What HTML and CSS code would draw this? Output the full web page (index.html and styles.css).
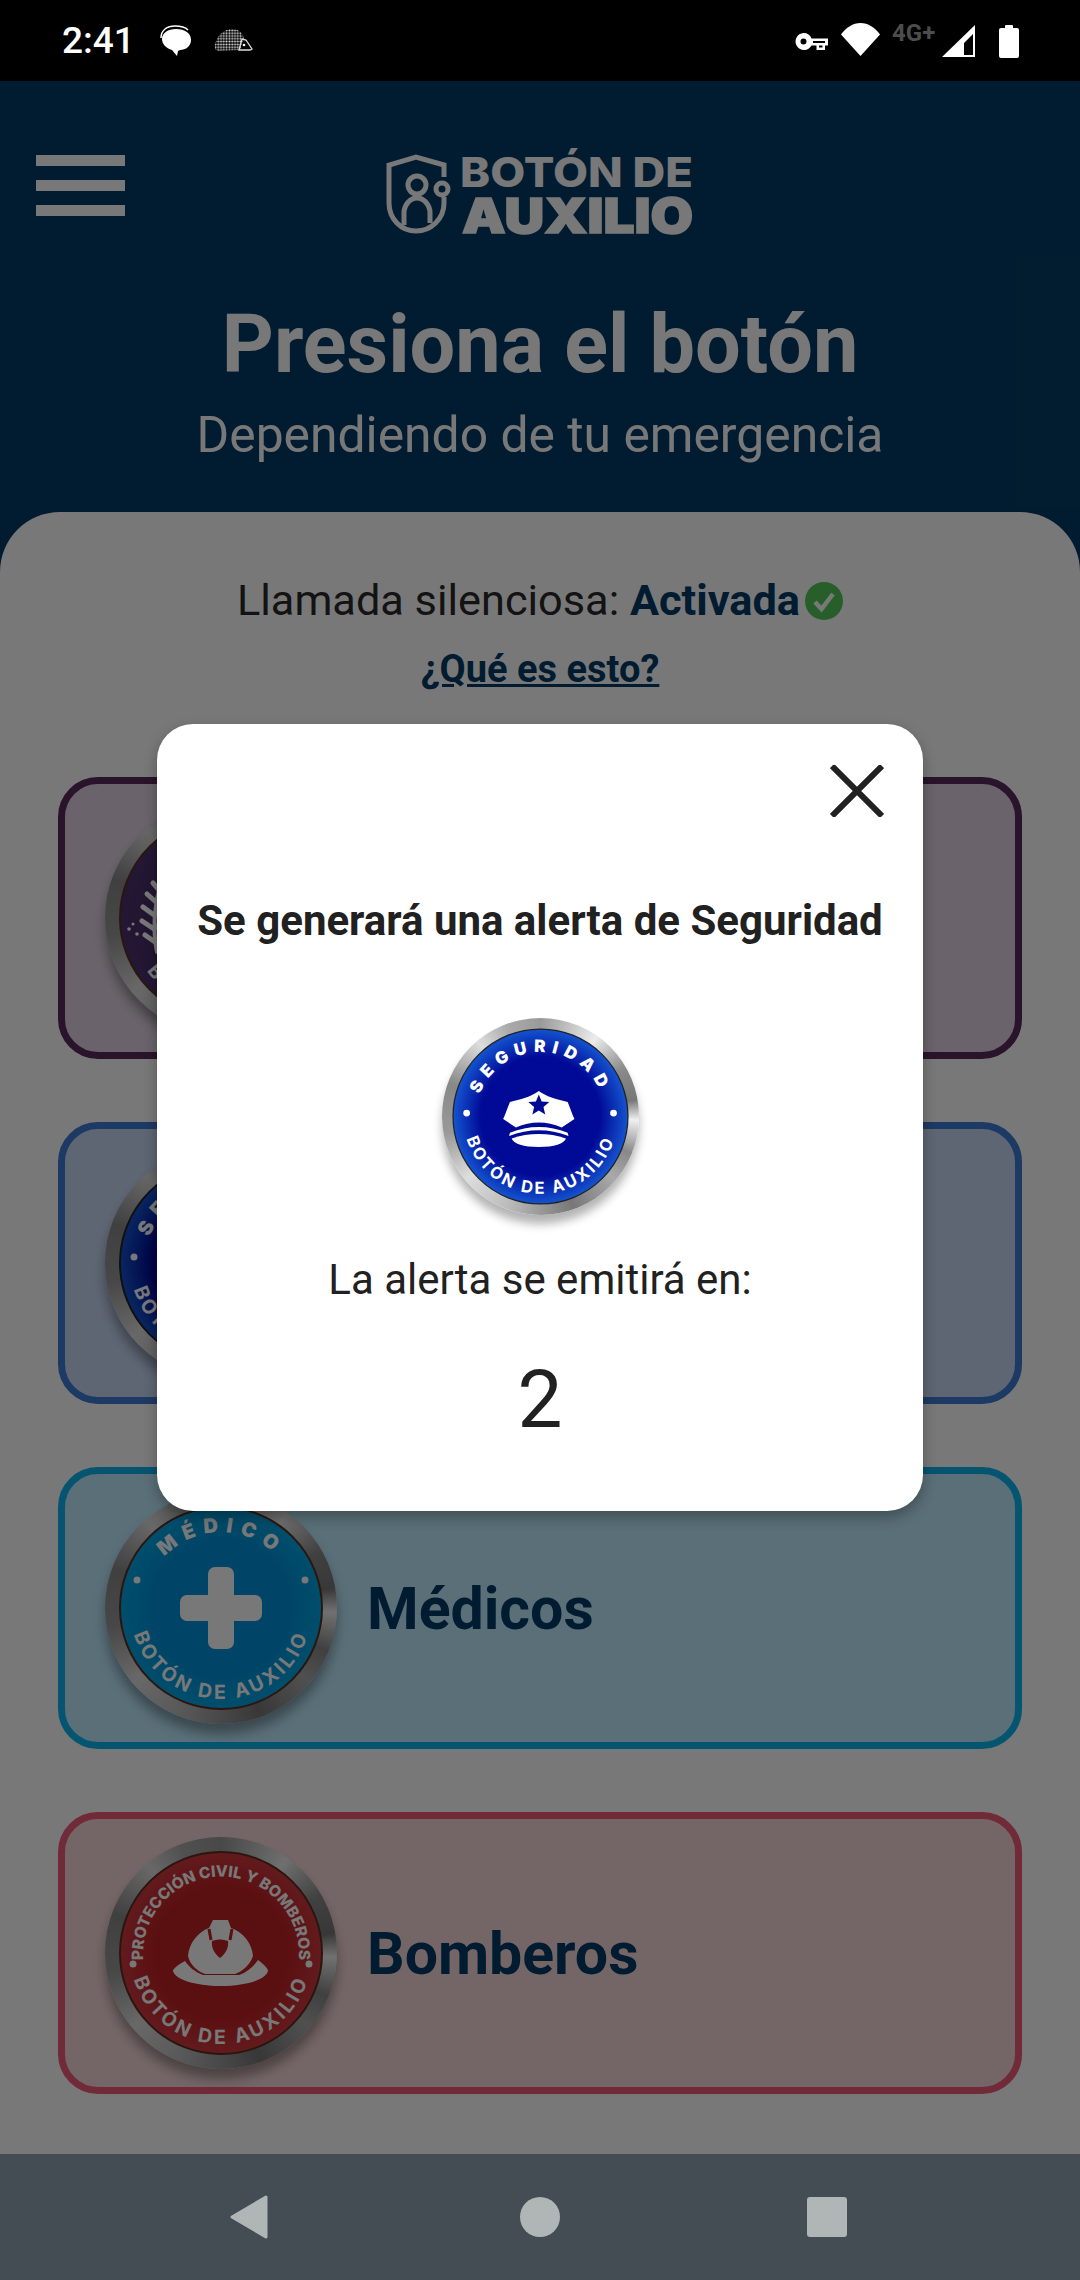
FILE: index.html
```html
<!DOCTYPE html>
<html lang="es">
<head>
<meta charset="utf-8">
<title>Botón de Auxilio</title>
<link rel="stylesheet" href="styles.css">
</head>
<body>
<div class="phone">
  <div class="status">
    <div class="status-left">
      <span class="time">2:41</span>
      <svg class="ic-bubble" viewBox="0 0 32 31"><path d="M1 13C1 5 7 1 15 1c6 0 10 1 13 4" fill="none" stroke="#fff" stroke-width="1.500"/><path d="M16 4c9 0 15 4 15 11 0 6-5 10-11 10l-2 1-1 5-5-6C6 23 2 19 2 14 2 8 8 4 16 4z" fill="#fff"/></svg>
      <svg class="ic-hog" viewBox="0 0 39 23">
        <defs><pattern id="quills" width="2.800" height="2.800" patternUnits="userSpaceOnUse"><circle cx="1.400" cy="1.400" r="1" fill="#eee"/></pattern></defs>
        <path d="M1 20C0 9 9 0 18 0c6 0 10 3 12 9l-4 12-22 1z" fill="url(#quills)"/>
        <path d="M25 21l3-11 4 1 6 9-2 1z" fill="none" stroke="#ddd" stroke-width="1.300"/>
        <circle cx="30" cy="16" r="1.300" fill="#fff"/>
      </svg>
    </div>
    <div class="status-right">
      <svg class="ic-key" viewBox="0 0 33 17"><path fill="#fff" fill-rule="evenodd" d="M8.500 0a8.500 8.500 0 0 1 8 5.500H33v7h-3V17h-8.500v-4.500H16.500A8.500 8.500 0 1 1 8.500 0zm0 5.500a3 3 0 1 0 0 6 3 3 0 0 0 0-6zM18 8v2h12V8zM24 12.500V14.500h3.500V12.500z"/></svg>
      <svg class="ic-wifi" viewBox="0 0 39 33"><path d="M0 11.500C5 4.500 12 0 19.500 0S34 4.500 39 11.500L19.500 33z" fill="#fff"/></svg>
      <span class="net">4G+</span>
      <svg class="ic-signal" viewBox="0 0 33 32"><path d="M33 0v32H0zM31 9l-9 9v12h9z" fill="#fff" fill-rule="evenodd"/></svg>
      <svg class="ic-battery" viewBox="0 0 20 34"><path d="M6 2a1 1 0 0 1 1-1h6a1 1 0 0 1 1 1v2h4a2 2 0 0 1 2 2v26a2 2 0 0 1-2 2H2a2 2 0 0 1-2-2V6a2 2 0 0 1 2-2h4z" fill="#fff"/></svg>
    </div>
  </div>

  <div class="app">
    <header class="head">
      <div class="head-top">
        <div class="burger"><span></span><span></span><span></span></div>
        <svg class="logo" viewBox="0 0 310 92">
          <g fill="none" stroke="#fff" stroke-width="5">
            <path d="M59 32V20L31 12 4 20v38c0 16 12 28 27 28s28-12 28-28v-6"/>
            <circle cx="32" cy="40" r="9"/>
            <circle cx="57" cy="44" r="6"/>
            <path d="M19 80V68c0-8 6-15 13-15s13 7 13 15v10"/>
          </g>
          <text class="logo-a" x="75" y="42" textLength="233" lengthAdjust="spacingAndGlyphs">BOTÓN DE</text>
          <text class="logo-b" x="77" y="88" textLength="231" lengthAdjust="spacingAndGlyphs">AUXILIO</text>
        </svg>
        <div></div>
      </div>
      <h1 class="title">Presiona el botón</h1>
      <p class="sub">Dependiendo de tu emergencia</p>
    </header>

    <main class="sheet">
      <p class="silent">Llamada silenciosa: <b class="on">Activada</b><svg class="check" viewBox="0 0 38 38"><circle cx="19" cy="19" r="19" fill="#55c85a"/><path d="M10 20l6.500 7L28 12" fill="none" stroke="#fff" stroke-width="4.500"/></svg></p>
      <a class="what">¿Qué es esto?</a>

      <div class="cards">
        <div class="card card-purple">
          <div class="coin">
            <svg viewBox="0 0 232 232">
              <defs><radialGradient id="gp"><stop offset=".7" stop-color="#482d66"/><stop offset="1" stop-color="#4e3270"/></radialGradient>
              <path id="bp" d="M25 116A91 91 0 0 0 207 116"/></defs>
              <circle cx="116" cy="116" r="101" fill="url(#gp)" stroke="#5a3020" stroke-width="2"/>
              <g fill="none" stroke="#fff" stroke-linecap="round">
                <path stroke-width="4" d="M52 150C48 130 49 105 56 80"/>
                <path stroke-width="5" d="M50 140l-10-7M49 127l-12-8M49 113l-11-8M51 100l-9-8M54 88l-6-7M50 140l9-8M49 127l9-8M49 113l9-8M51 100l8-8"/>
              </g>
              <g fill="#fff"><circle cx="24" cy="127" r="1.800"/><circle cx="28" cy="122" r="1.500"/><circle cx="32" cy="132" r="1.800"/></g>
              <text class="coin-b"><textPath href="#bp" startOffset="56" class="tight">BOTÓN DE AUXILIO</textPath></text>
            </svg>
          </div>
        </div>

        <div class="card card-blue">
          <div class="coin">
            <svg viewBox="0 0 232 232">
              <defs><radialGradient id="gb1"><stop offset=".68" stop-color="#000a96"/><stop offset="1" stop-color="#1454d0"/></radialGradient>
              <path id="tb1" d="M40 116A76 76 0 0 1 192 116"/><path id="bb1" d="M25 116A91 91 0 0 0 207 116"/></defs>
              <circle cx="116" cy="116" r="101" fill="url(#gb1)" stroke="#222" stroke-width="2"/>
              <text class="coin-t"><textPath href="#tb1" startOffset="50%" text-anchor="middle">SEGURIDAD</textPath></text>
              <text class="coin-b"><textPath href="#bb1" startOffset="50%" text-anchor="middle">BOTÓN DE AUXILIO</textPath></text>
              <circle cx="29" cy="110" r="3.500" fill="#fff"/><circle cx="203" cy="110" r="3.500" fill="#fff"/>
            </svg>
          </div>
        </div>

        <div class="card card-teal">
          <div class="coin">
            <svg viewBox="0 0 232 232">
              <defs><radialGradient id="gt"><stop offset=".7" stop-color="#0094dc"/><stop offset="1" stop-color="#00a6e6"/></radialGradient>
              <path id="tt" d="M40 116A76 76 0 0 1 192 116"/><path id="bt" d="M25 116A91 91 0 0 0 207 116"/></defs>
              <circle cx="116" cy="116" r="101" fill="url(#gt)" stroke="#5a3020" stroke-width="2"/>
              <text class="coin-t"><textPath href="#tt" startOffset="50%" text-anchor="middle">MÉDICO</textPath></text>
              <text class="coin-b"><textPath href="#bt" startOffset="50%" text-anchor="middle">BOTÓN DE AUXILIO</textPath></text>
              <circle cx="32" cy="88" r="3.500" fill="#fff"/><circle cx="200" cy="88" r="3.500" fill="#fff"/>
              <g fill="#fff"><rect x="103" y="75" width="26" height="82" rx="7"/><rect x="75" y="103" width="82" height="26" rx="7"/></g>
            </svg>
          </div>
          <span class="card-label">Médicos</span>
        </div>

        <div class="card card-red">
          <div class="coin">
            <svg viewBox="0 0 232 232">
              <defs><radialGradient id="gr"><stop offset=".65" stop-color="#c02022"/><stop offset="1" stop-color="#d23a40"/></radialGradient>
              <path id="tr" d="M39 130A78 78 0 1 1 193 130"/><path id="br" d="M25 116A91 91 0 0 0 207 116"/></defs>
              <circle cx="116" cy="116" r="101" fill="url(#gr)" stroke="#5a3020" stroke-width="2"/>
              <text class="coin-s"><textPath href="#tr" startOffset="50%" text-anchor="middle">PROTECCIÓN CIVIL Y BOMBEROS</textPath></text>
              <text class="coin-b"><textPath href="#br" startOffset="50%" text-anchor="middle">BOTÓN DE AUXILIO</textPath></text>
              <circle cx="28" cy="127" r="3.500" fill="#fff"/><circle cx="204" cy="127" r="3.500" fill="#fff"/>
              <path fill="#fff" d="M108 83H123L126 91C138 95 147 106 148 119C145 128 138 134 130 137H100C92 134 85 128 83 119C84 106 93 95 104 91Z"/>
              <path d="M104 92l2 11M127 92l-2 11" fill="none" stroke="#c02022" stroke-width="3"/>
              <path fill="#c02022" d="M107 104c6-2 11-2 16 0 1 7-3 13-8 17-5-4-9-10-8-17z"/>
              <path fill="#fff" d="M68 133C71 129 76 126 80 124C84 130 90 135 98 138H134C142 135 148 130 153 123C157 126 161 129 163 133C163 142 142 149 116 149C90 149 68 142 68 133Z"/>
            </svg>
          </div>
          <span class="card-label">Bomberos</span>
        </div>
      </div>
    </main>

    <div class="scrim">
      <section class="modal">
        <svg class="close" viewBox="0 0 54 52"><path d="M2 1l50 50M52 1L2 51" fill="none" stroke="#212121" stroke-width="6"/></svg>
        <h2 class="modal-title">Se generará una alerta de Seguridad</h2>
        <div class="coin coin-lg">
          <svg viewBox="0 0 232 232">
            <defs><radialGradient id="gb2"><stop offset=".68" stop-color="#000a96"/><stop offset="1" stop-color="#1454d0"/></radialGradient>
            <path id="tb2" d="M40 116A76 76 0 0 1 192 116"/><path id="bb2" d="M25 116A91 91 0 0 0 207 116"/></defs>
            <circle cx="116" cy="116" r="103" fill="url(#gb2)" stroke="#222" stroke-width="1.500"/>
            <text class="coin-t"><textPath href="#tb2" startOffset="50%" text-anchor="middle">SEGURIDAD</textPath></text>
            <text class="coin-b"><textPath href="#bb2" startOffset="50%" text-anchor="middle">BOTÓN DE AUXILIO</textPath></text>
            <circle cx="29" cy="112" r="4" fill="#fff"/><circle cx="202" cy="112" r="4" fill="#fff"/>
            <g transform="translate(-2 -4)">
              <path fill="#fff" d="M116 90c9 7 22 10 34 13 3 7 5 14 8 20l-15 10c-18-8-36-8-54 0l-15-10c3-6 5-13 8-20 12-3 25-6 34-13z"/>
              <path fill="#fff" d="M82 139c22-9 46-9 68 0l1 4c-23-9-47-9-70 0z"/>
              <path fill="#fff" d="M84 146c20-7 44-7 64 0-2 6-14 10-32 10s-30-4-32-10z"/>
              <path fill="#000a96" d="M116 94l3.400 8.300 9 .7-6.900 5.800 2.100 8.800-7.600-4.700-7.600 4.700 2.100-8.800-6.900-5.800 9-.7z"/>
            </g>
          </svg>
        </div>
        <p class="modal-text">La alerta se emitirá en:</p>
        <p class="count">2</p>
      </section>
    </div>
  </div>

  <nav class="nav">
    <svg class="nav-back" viewBox="0 0 38 44"><path d="M36 2L2 22l34 20z" fill="#b0b5b6" stroke="#b0b5b6" stroke-width="3" stroke-linejoin="round"/></svg>
    <span class="nav-home"></span>
    <span class="nav-recent"></span>
  </nav>
</div>
</body>
</html>
```

FILE: styles.css
```css
* { box-sizing: border-box; }
html, body { margin: 0; padding: 0; }
body { font-family: Roboto, "Liberation Sans", sans-serif; color: #2a2a2a; }
h1, h2, p { margin: 0; }

.phone { width: 1080px; height: 2280px; display: flex; flex-direction: column; overflow: hidden; }

/* status bar */
.status { height: 81px; flex: none; background: #000; color: #fff; display: flex; justify-content: space-between; align-items: center; padding: 0 61px 0 62px; }
.status-left, .status-right { display: flex; align-items: center; }
.time { font-size: 37px; font-weight: 500; width: 70px; line-height: 1; }
.ic-bubble { width: 32px; height: 31px; margin-left: 28px; }
.ic-hog { width: 39px; height: 23px; margin-left: 22px; }
.ic-key { width: 33px; height: 17px; margin-top: 2px; }
.ic-wifi { width: 39px; height: 33px; margin-left: 13px; margin-top: -2px; }
.net { font-size: 24px; font-weight: 700; color: #4d4d4d; width: 44px; margin-left: 12px; margin-top: -15px; line-height: 1; white-space: nowrap; }
.ic-signal { width: 33px; height: 32px; margin-left: 6px; }
.ic-battery { width: 20px; height: 34px; margin-left: 24px; }

/* app */
.app { flex: 1; position: relative; display: flex; flex-direction: column; background: #043c66; }
.head { height: 431px; flex: none; padding-top: 64px; color: #fff; text-align: center; }
.head-top { display: grid; grid-template-columns: 1fr 310px 1fr; align-items: start; height: 92px; }
.burger { display: flex; flex-direction: column; gap: 14px; margin: 10px 0 0 36px; width: 89px; }
.burger span { height: 11px; background: #fff; }
.logo { width: 310px; height: 92px; overflow: visible; }
.logo-a { font-family: Inter, sans-serif; font-weight: 800; font-size: 41px; fill: #fff; }
.logo-b { font-family: Inter, sans-serif; font-weight: 900; font-size: 48px; fill: #fff; stroke: #fff; stroke-width: 1.5px; }
.title { font-size: 81px; font-weight: 700; line-height: 94px; margin-top: 61px; }
.sub { font-size: 49.800px; font-weight: 400; line-height: 56px; margin-top: 15px; }

.sheet { flex: 1; background: #fff; border-radius: 60px 60px 0 0; padding-top: 64px; display: flex; flex-direction: column; align-items: center; }
.silent { font-size: 43.300px; line-height: 50px; display: flex; align-items: center; white-space: pre; }
.on { color: #043c66; font-weight: 700; }
.check { width: 38px; height: 38px; margin-left: 5px; }
.what { font-size: 38px; font-weight: 700; color: #043c66; text-decoration: underline; line-height: 46px; margin-top: 20px; }

.cards { align-self: stretch; margin: 85px 58px 0; display: flex; flex-direction: column; gap: 63px; }
.card { height: 282px; border: 7px solid; border-radius: 40px; display: flex; align-items: center; gap: 30px; padding-left: 40px; }
.card-purple { background: #e2d3e4; border-color: #5a2b5c; }
.card-blue { background: #c8d9f5; border-color: #3c7bd3; }
.card-teal { background: #bfecff; border-color: #0cb5f0; }
.card-red { background: #f7d9d9; border-color: #f05a78; }
.card-label { font-size: 59px; font-weight: 700; color: #043c66; }

.coin { width: 232px; height: 232px; flex: none; border-radius: 50%;
  background: conic-gradient(#9a9a9a 0deg, #c8c8c8 20deg, #ececec 35deg, #8a8a8a 60deg, #777 80deg, #f0f0f0 92deg, #888 112deg, #aaa 130deg, #777 160deg, #bbb 200deg, #ddd 230deg, #999 260deg, #888 290deg, #ddd 320deg, #aaa 340deg, #9a9a9a 360deg);
  box-shadow: 0 10px 12px rgba(0, 0, 0, .35); }
.coin svg { display: block; width: 100%; height: 100%; }
.coin-t, .coin-b, .coin-s { font-family: Inter, sans-serif; font-weight: 700; fill: #fff; }
.coin-t { font-size: 20px; letter-spacing: 7.500px; font-weight: 900; }
.coin-b { font-size: 19.500px; letter-spacing: 3px; }
.coin-s { font-size: 15.500px; font-weight: 800; letter-spacing: 0; }
.tight { letter-spacing: 0; }

/* dialog */
.scrim { position: absolute; inset: 0; background: rgba(0, 0, 0, .53); display: flex; align-items: center; justify-content: center; }
.modal { width: 766px; height: 787px; background: #fff; border-radius: 36px; box-shadow: 0 6px 14px rgba(0, 0, 0, .3); display: flex; flex-direction: column; align-items: center; position: relative; padding-top: 172px; color: #212121; }
.close { position: absolute; top: 41px; right: 39px; width: 54px; height: 52px; }
.modal-title { font-size: 42px; font-weight: 700; line-height: 50px; white-space: nowrap; }
.coin-lg { width: 197px; height: 197px; box-shadow: 0 9px 10px rgba(0, 0, 0, .3); margin-top: 72px; }
.modal-text { font-size: 42px; line-height: 50px; margin-top: 40px; }
.count { font-size: 80px; line-height: 94px; margin-top: 48px; }

/* nav */
.nav { height: 126px; flex: none; background: #454d54; display: flex; align-items: center; padding-left: 230px; }
.nav-back { width: 38px; height: 44px; margin-right: 252px; }
.nav-home { width: 40px; height: 40px; border-radius: 50%; background: #b0b5b6; }
.nav-recent { width: 40px; height: 40px; border-radius: 3px; background: #b0b5b6; margin-left: 247px; }
```
